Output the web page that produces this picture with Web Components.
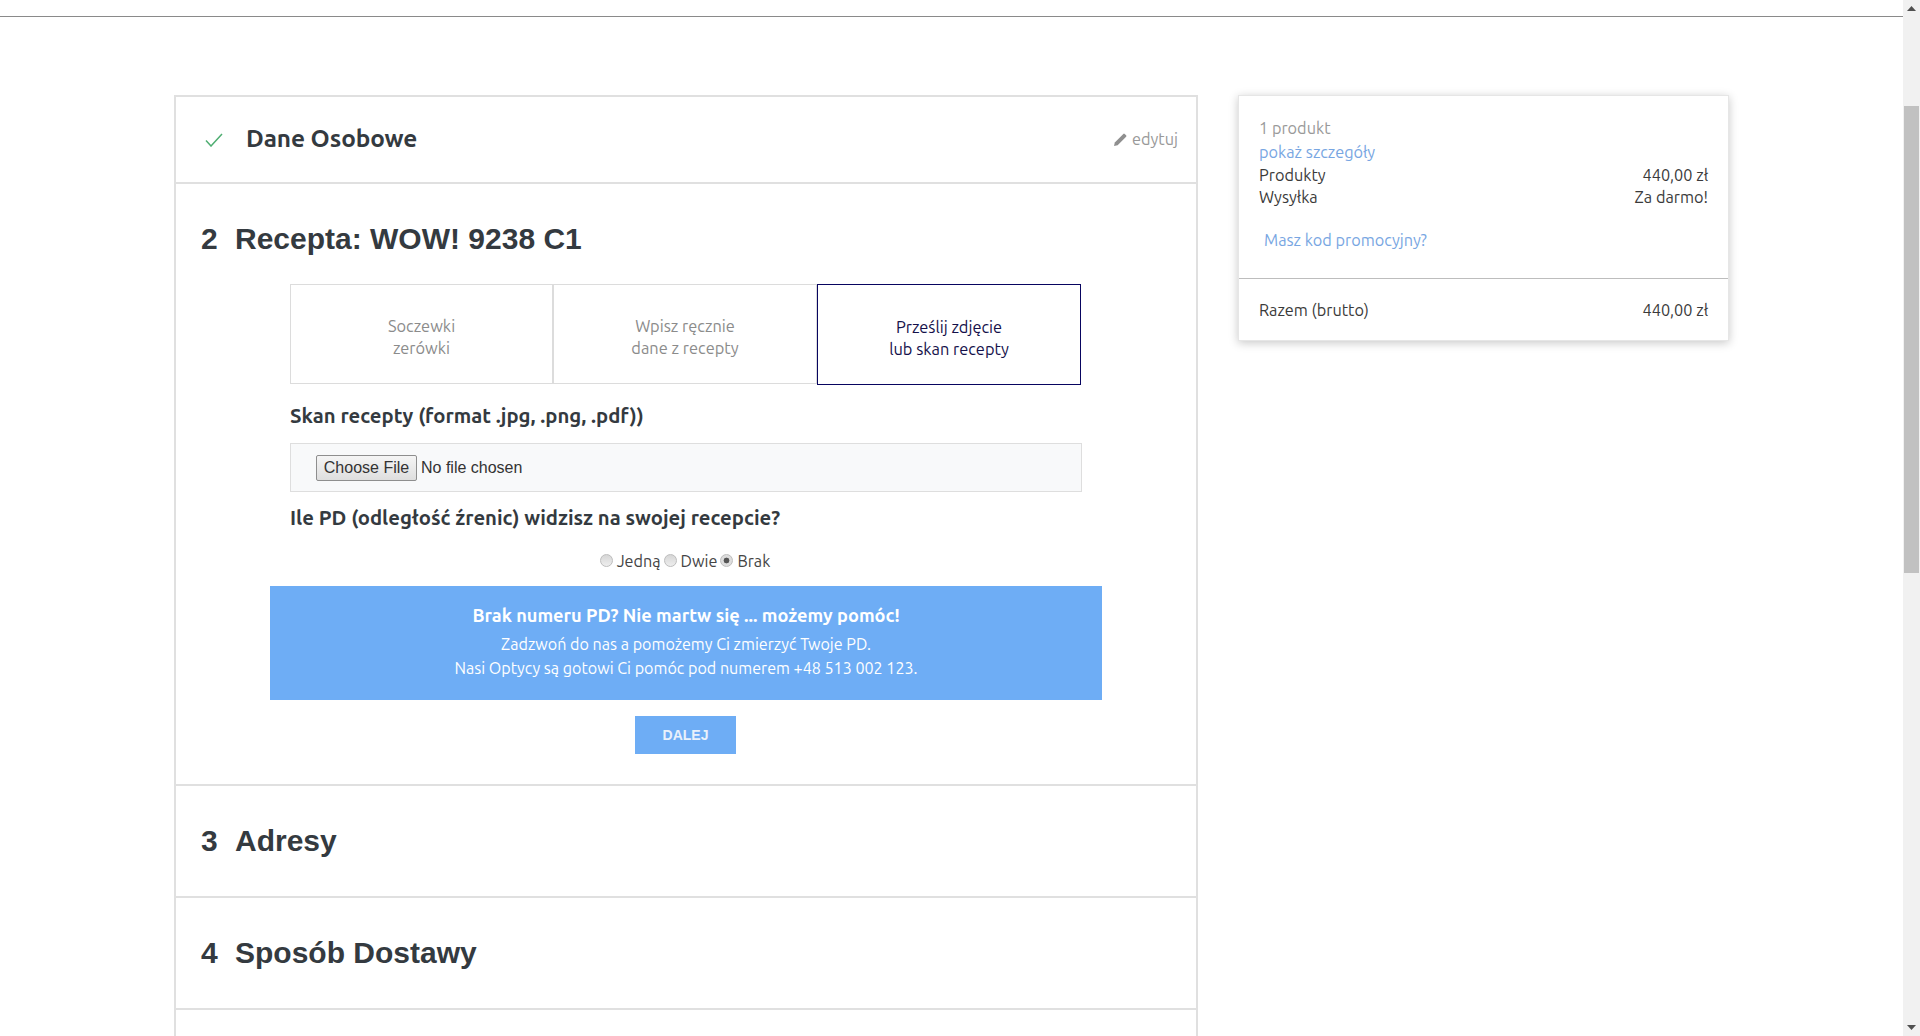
<!DOCTYPE html>
<html lang="pl"><head><meta charset="utf-8"><title>Zamówienie</title>
<style>
html,body{margin:0;height:100%;overflow:hidden;background:#fff}
body{font-family:"Ubuntu","Noto Sans","Liberation Sans",sans-serif;color:#343a40}
</style></head><body>
<checkout-app>
  <top-bar></top-bar>
  <div slot="main" style="display:flex;align-items:flex-start;gap:40px;padding:78px 0 0 174px">
    <step-list>
      <done-step title-text="Dane Osobowe"></done-step>
      <open-step num="2" title-text="Recepta: WOW! 9238 C1">
        <rx-tabs>
          <rx-tab>Soczewki<br>zerówki</rx-tab>
          <rx-tab>Wpisz ręcznie<br>dane z recepty</rx-tab>
          <rx-tab active>Prześlij zdjęcie<br>lub skan recepty</rx-tab>
        </rx-tabs>
        <form-label top="16" bottom="12">Skan recepty (format .jpg, .png, .pdf))</form-label>
        <file-field></file-field>
        <form-label top="11" bottom="0">Ile PD (odległość źrenic) widzisz na swojej recepcie?</form-label>
        <pd-radios></pd-radios>
        <help-banner></help-banner>
        <next-button>DALEJ</next-button>
      </open-step>
      <closed-step num="3" title-text="Adresy"></closed-step>
      <closed-step num="4" title-text="Sposób Dostawy"></closed-step>
      <closed-step></closed-step>
    </step-list>
    <order-summary></order-summary>
  </div>
</checkout-app>
<script>
function def(name, css, html, init){
  customElements.define(name, class extends HTMLElement{
    constructor(){super();this.attachShadow({mode:'open'});}
    connectedCallback(){
      const h = typeof html==='function'?html(this):html;
      this.shadowRoot.innerHTML = '<style>'+css+'</style>'+h;
      if(init)init(this);
    }
  });
}
const UB = '"Ubuntu","Noto Sans","Liberation Sans",sans-serif';
const H2 = 'font:700 30px/48px "Liberation Sans",Arial,sans-serif;color:#343a40;margin:0;display:flex;';

def('checkout-app',
 `:host{display:flex;height:1036px;width:1920px;overflow:hidden}
  .main{flex:1;min-width:0;height:1036px;overflow:hidden;display:flex;flex-direction:column}
  .bar{width:17px;flex:none;background:#f1f1f1;display:flex;flex-direction:column;align-items:center}
  .btn{height:17px;width:17px;display:flex;align-items:center;justify-content:center;flex:none}
  .thumb{width:15px;height:467px;background:#c1c1c1;margin-top:89px;flex:none}
  .sp{flex:1}`,
 `<div class="main"><slot></slot><slot name="main"></slot></div>
  <div class="bar" aria-hidden="true">
   <div class="btn"><svg width="9" height="5" viewBox="0 0 9 5"><path d="M4.5 0 9 5H0z" fill="#505050"/></svg></div>
   <div class="thumb"></div><div class="sp"></div>
   <div class="btn"><svg width="9" height="5" viewBox="0 0 9 5"><path d="M0 0h9L4.5 5z" fill="#505050"/></svg></div>
  </div>`);

def('top-bar', `:host{display:block;height:16px;border-bottom:1px solid #8a8a8a;flex:none}`, ``);

def('step-list', `:host{display:block;width:1020px;flex:none;border:2px solid #e0e0e0;border-bottom:0;background:#fff}`, `<slot></slot>`);

def('done-step',
 `:host{display:flex;align-items:center;height:85px;border-bottom:2px solid #e0e0e0;position:relative;font-family:${UB}}
  svg{margin-left:29px;flex:none}
  h3{margin:0 0 0 23px;font:700 24.4px/32px ${UB};color:#343a40;position:relative;top:-2px;letter-spacing:-.1px}
  .edit{margin-left:auto;margin-right:18px;display:flex;align-items:center;gap:5px;color:#999;font-size:16.3px;line-height:24px;position:relative;top:-1px}
  .edit svg{margin:0;position:relative;top:1px}`,
 h=>`<svg width="18" height="14" viewBox="0 0 18 14"><path d="M1 7.5 6 13 17 1" fill="none" stroke="#4fae72" stroke-width="1.5"/></svg>
  <h3>${h.getAttribute('title-text')}</h3>
  <span class="edit"><svg width="13" height="13" viewBox="0 0 13 13"><path d="M0 13l.8-3.6L9.3.9a1 1 0 0 1 1.4 0l1.4 1.4a1 1 0 0 1 0 1.4L3.6 12.2z" fill="#8f8f8f"/></svg>edytuj</span>`);

def('open-step',
 `:host{display:block;border-bottom:2px solid #e0e0e0;padding:31px 0 30px}
  h2{${H2}padding-left:25px;margin-bottom:21px}
  .n{width:34px;flex:none}
  .body{display:flex;flex-direction:column}`,
 h=>`<h2><span class="n">${h.getAttribute('num')}</span><span>${h.getAttribute('title-text')}</span></h2><div class="body"><slot></slot></div>`);

def('closed-step',
 `:host{display:block;height:110px;border-bottom:2px solid #e0e0e0;box-sizing:content-box}
  h2{${H2}padding:31px 0 0 25px}
  .n{width:34px;flex:none}`,
 h=>h.hasAttribute('num')?`<h2><span class="n">${h.getAttribute('num')}</span><span>${h.getAttribute('title-text')}</span></h2>`:'');

def('rx-tabs', `:host{display:grid;grid-template-columns:263px 264px 264px;align-items:start;margin-left:114px;width:791px}`, `<slot></slot>`);

def('rx-tab',
 `:host{display:flex;align-items:center;justify-content:center;box-sizing:border-box;height:100px;padding-top:5px;border:1px solid #dcdcdc;text-align:center;font:16.4px/22px ${UB};color:#8b8b8b}
  :host([active]){height:101px;border-color:#080560;color:#14104a;padding-top:7px}`,
 `<div><slot></slot></div>`);

def('form-label',
 `:host{display:block;margin-left:114px;font:700 20.3px/30px ${UB};color:#343a40;white-space:nowrap}`,
 `<slot></slot>`,
 h=>{h.style.paddingTop=h.getAttribute('top')+'px';h.style.paddingBottom=h.getAttribute('bottom')+'px';});

def('file-field',
 `:host{display:flex;align-items:center;box-sizing:border-box;margin-left:114px;width:792px;height:49px;background:#f8f9fa;border:1px solid #dedede;padding-left:25px;font:16px "Liberation Sans",Arial,sans-serif;color:#333}
  button{box-sizing:border-box;width:101px;height:26px;padding:0;font:16px "Liberation Sans",Arial,sans-serif;color:#333;background:linear-gradient(#f5f5f5,#dedede);border:1px solid #8e8e8e;border-radius:2px;margin-right:4px}`,
 `<button type="button">Choose File</button><span>No file chosen</span>`);

def('pd-radios',
 `:host{display:flex;justify-content:center;align-items:center;height:24px;margin:16px 0 13px;padding-right:2px;font:16.2px/24px ${UB};color:#444}
  label{display:flex;align-items:center}
  input{appearance:none;margin:-2px 4px 0 0;width:13px;height:13px;border-radius:50%;border:1px solid #bdbdbd;box-sizing:border-box;background:linear-gradient(#d6d6d6,#eee)}
  input:checked{background:radial-gradient(circle,#555 0 2.6px,#ddd 3.2px)}
  label+label{margin-left:3px}`,
 `<label><input type="radio" name="pd">Jedną</label><label><input type="radio" name="pd">Dwie</label><label><input type="radio" name="pd" checked>Brak</label>`);

def('help-banner',
 `:host{display:block;margin-left:94px;width:832px;box-sizing:border-box;height:114px;padding-top:17px;background:#6eadf5;color:#fff;text-align:center;font:16.1px/24px ${UB}}
  b{display:block;font-size:18.2px;margin-bottom:5px;line-height:24px}`,
 `<b>Brak numeru PD? Nie martw się ... możemy pomóc!</b><div>Zadzwoń do nas a pomożemy Ci zmierzyć Twoje PD.</div><div>Nasi Optycy są gotowi Ci pomóc pod numerem +48 513 002 123.</div>`);

def('next-button',
 `:host{display:block;margin:16px 0 0 459px;width:101px}
  button{display:block;width:101px;height:38px;border:0;padding:0;background:#6eadf5;color:#e9f1fb;font:700 14px "Liberation Sans",Arial,sans-serif}`,
 `<button type="button"><slot></slot></button>`);

def('order-summary',
 `:host{display:block;width:491px;flex:none;box-sizing:border-box;background:#fff;border:1px solid #e6e6e6;box-shadow:0 2px 9px rgba(0,0,0,.22);font:16.3px/22px ${UB};color:#3a3a3a}
  .top{padding:20px 20px 0;border-bottom:1px solid #bdbdbd;height:183px;box-sizing:border-box}
  .c{color:#999;line-height:24px}
  a{color:#78a6e2;text-decoration:none;display:block;line-height:24px}
  .r{display:flex;justify-content:space-between}
  .promo{margin:20px 0 0 5px}
  .tot{padding:20px 20px 19px}`,
 `<div class="top"><div class="c">1 produkt</div><a href="#">pokaż szczegóły</a>
   <div class="r"><span>Produkty</span><span>440,00 zł</span></div>
   <div class="r"><span>Wysyłka</span><span>Za darmo!</span></div>
   <a class="promo" href="#">Masz kod promocyjny?</a></div>
  <div class="tot r"><span>Razem (brutto)</span><span>440,00 zł</span></div>`);
</script>
</body></html>
